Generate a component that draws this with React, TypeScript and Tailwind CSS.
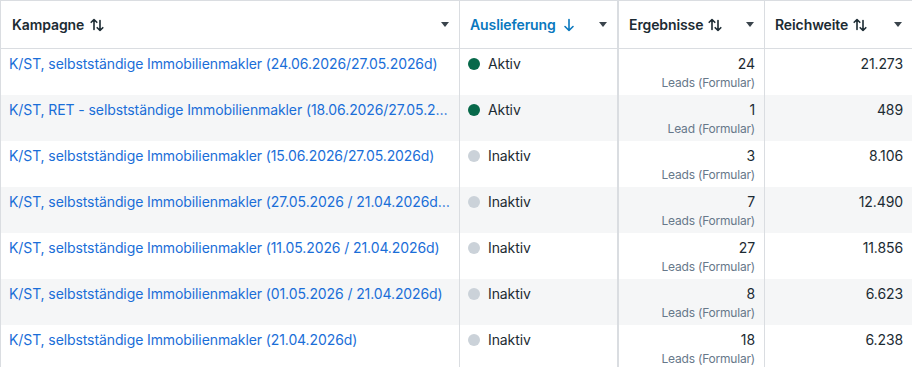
import React from "react";

const rows = [
  { name: "K/ST, selbstständige Immobilienmakler (24.06.2026/27.05.2026d)", active: true, n: "24", lab: "Leads (Formular)", reach: "21.273" },
  { name: "K/ST, RET - selbstständige Immobilienmakler (18.06.2026/27.05.2026d)", active: true, n: "1", lab: "Lead (Formular)", reach: "489" },
  { name: "K/ST, selbstständige Immobilienmakler (15.06.2026/27.05.2026d)", active: false, n: "3", lab: "Leads (Formular)", reach: "8.106" },
  { name: "K/ST, selbstständige Immobilienmakler (27.05.2026 / 21.04.2026d) – Kopie", active: false, n: "7", lab: "Leads (Formular)", reach: "12.490" },
  { name: "K/ST, selbstständige Immobilienmakler (11.05.2026 / 21.04.2026d)", active: false, n: "27", lab: "Leads (Formular)", reach: "11.856" },
  { name: "K/ST, selbstständige Immobilienmakler (01.05.2026 / 21.04.2026d)", active: false, n: "8", lab: "Leads (Formular)", reach: "6.623" },
  { name: "K/ST, selbstständige Immobilienmakler (21.04.2026d)", active: false, n: "18", lab: "Leads (Formular)", reach: "6.238" },
];

function SortIcon() {
  return (
    <svg width="14" height="14" viewBox="0 0 14 14" fill="none" stroke="currentColor" strokeWidth="1.6" strokeLinecap="round" strokeLinejoin="round">
      <path d="M4 11.5V1.5M1.2 4.3L4 1.5L6.8 4.3" />
      <path d="M10 2.5v10M7.2 9.7L10 12.5L12.8 9.7" />
    </svg>
  );
}

function DownIcon() {
  return (
    <svg width="12" height="14" viewBox="0 0 12 14" fill="none" stroke="currentColor" strokeWidth="1.6" strokeLinecap="round" strokeLinejoin="round">
      <path d="M6 1.5v11M2 8.5L6 12.5L10 8.5" />
    </svg>
  );
}

function Caret() {
  return (
    <svg width="8" height="5" viewBox="0 0 8 5" className="shrink-0">
      <path d="M0 0h8L4 5z" fill="#3a444c" />
    </svg>
  );
}

export default function App() {
  return (
    <div
      className="w-[912px] h-[367px] overflow-hidden bg-white text-[#1c2b33] tracking-[-0.1px]"
      style={{ fontFamily: "Inter, 'Noto Sans', sans-serif" }}
    >
      <div className="flex h-[49px] border-t border-l border-b border-[#dadde1]">
        <div className="w-[459px] flex items-center pl-[11px] pr-[10px] border-r border-[#dadde1]">
          <span className="text-[14px] font-semibold">Kampagne</span>
          <span className="ml-[6px] text-[#1c2b33]"><SortIcon /></span>
          <span className="flex-1" />
          <Caret />
        </div>
        <div className="w-[159px] flex items-center pl-[10px] pr-[10px] border-r-2 border-[#dadde1]">
          <span className="text-[14px] font-semibold text-[#0a78be]">Auslieferung</span>
          <span className="ml-[7px] text-[#0a78be]"><DownIcon /></span>
          <span className="flex-1" />
          <Caret />
        </div>
        <div className="w-[146px] flex items-center pl-[10px] pr-[10px] border-r border-[#dadde1]">
          <span className="text-[14px] font-semibold">Ergebnisse</span>
          <span className="ml-[5px]"><SortIcon /></span>
          <span className="flex-1" />
          <Caret />
        </div>
        <div className="flex-1 flex items-center pl-[10px] pr-[10px]">
          <span className="text-[14px] font-semibold">Reichweite</span>
          <span className="ml-[5px]"><SortIcon /></span>
          <span className="flex-1" />
          <Caret />
        </div>
      </div>
      {rows.map((r, i) => (
        <div key={i} className={`flex h-[46px] border-l border-[#dadde1] ${i % 2 === 1 ? "bg-[#f5f6f7]" : "bg-white"}`}>
          <div className="w-[459px] pl-[8px] pr-[9px] pt-[5px] border-r border-[#dadde1] min-w-0">
            <div className="truncate text-[14px] leading-[20px] text-[#1a6ed8]">{r.name}</div>
          </div>
          <div className="w-[159px] flex items-start pl-[8px] pt-[5px] border-r-2 border-[#dadde1]">
            <span className={`mt-[4px] w-[12px] h-[12px] rounded-full ${r.active ? "bg-[#07694a]" : "bg-[#cbd2d9]"}`} />
            <span className="ml-[8px] text-[14px] leading-[20px]">{r.active ? "Aktiv" : "Inaktiv"}</span>
          </div>
          <div className="w-[146px] flex flex-col items-end pr-[9px] pt-[5px] border-r border-[#dadde1]">
            <span className="text-[14px] leading-[20px]">{r.n}</span>
            <span className="text-[12px] leading-[16px] text-[#67788a] mt-[1px] tracking-[-0.2px]">{r.lab}</span>
          </div>
          <div className="flex-1 flex flex-col items-end pr-[9px] pt-[5px]">
            <span className="text-[14px] leading-[20px]">{r.reach}</span>
          </div>
        </div>
      ))}
    </div>
  );
}
